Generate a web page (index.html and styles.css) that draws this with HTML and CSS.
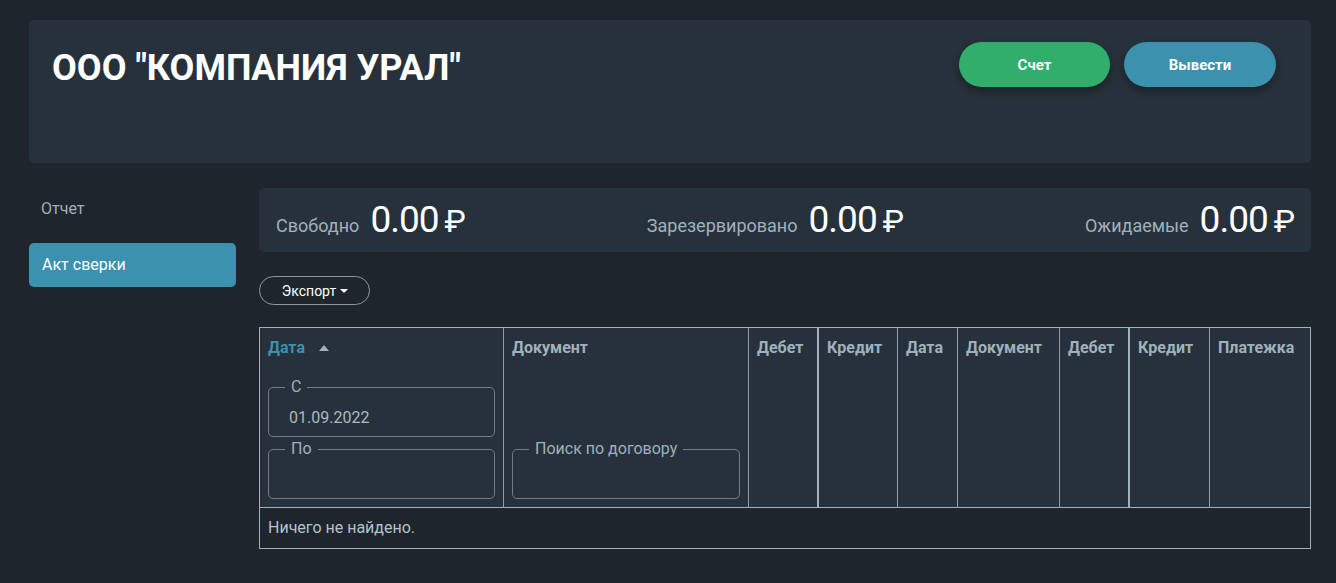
FILE: index.html
```html
<!DOCTYPE html>
<html lang="ru">
<head>
<meta charset="utf-8">
<title>ООО "КОМПАНИЯ УРАЛ"</title>
<link rel="stylesheet" href="styles.css">
</head>
<body>
<div class="page">
  <header class="head-card">
    <h1 class="title">ООО "КОМПАНИЯ УРАЛ"</h1>
    <div class="head-actions">
      <button class="pill pill-green">Счет</button>
      <button class="pill pill-blue">Вывести</button>
    </div>
  </header>

  <div class="layout">
    <nav class="sidebar">
      <a class="nav-item">Отчет</a>
      <a class="nav-item active">Акт сверки</a>
    </nav>

    <main class="main">
      <section class="balance">
        <div class="bal-item"><span class="bal-label">Свободно</span><span class="bal-amount">0.00<span class="rub">₽</span></span></div>
        <div class="bal-item"><span class="bal-label">Зарезервировано</span><span class="bal-amount">0.00<span class="rub">₽</span></span></div>
        <div class="bal-item"><span class="bal-label">Ожидаемые</span><span class="bal-amount">0.00<span class="rub">₽</span></span></div>
      </section>

      <div class="toolbar">
        <button class="export">Экспорт<span class="caret"></span></button>
      </div>

      <div class="grid">
        <div class="th th-date">
          <div class="th-title"><span class="sorted">Дата</span><span class="sort-up"></span></div>
          <div class="filters">
            <fieldset class="fs"><legend>С</legend><div class="fs-val">01.09.2022</div></fieldset>
            <fieldset class="fs"><legend>По</legend><div class="fs-val"></div></fieldset>
          </div>
        </div>
        <div class="th th-doc">
          <div class="th-title">Документ</div>
          <div class="filters">
            <fieldset class="fs"><legend>Поиск по договору</legend><div class="fs-val"></div></fieldset>
          </div>
        </div>
        <div class="th thick">Дебет</div>
        <div class="th">Кредит</div>
        <div class="th">Дата</div>
        <div class="th">Документ</div>
        <div class="th thick">Дебет</div>
        <div class="th">Кредит</div>
        <div class="th last">Платежка</div>
        <div class="empty">Ничего не найдено.</div>
      </div>
    </main>
  </div>
</div>
</body>
</html>
```

FILE: styles.css
```css
* { box-sizing: border-box; }
html, body { margin: 0; padding: 0; }
body {
  background: #1e252c;
  font-family: Roboto, "Liberation Sans", Arial, sans-serif;
  color: #9fb1bd;
}
.page { padding: 20px 25px 0 29px; }

.head-card {
  background: #27313b;
  border-radius: 5px;
  height: 143px;
  display: flex;
  justify-content: space-between;
  align-items: flex-start;
  padding: 22px 35px 0 23px;
}
.title {
  margin: 5px 0 0;
  font-size: 36px;
  line-height: 42px;
  font-weight: 700;
  color: #ffffff;
  letter-spacing: 0;
}
.head-actions { display: flex; gap: 14px; }
.pill {
  width: 151px;
  height: 45px;
  border: 0;
  border-radius: 23px;
  color: #fff;
  font-family: inherit;
  font-weight: 700;
  font-size: 15px;
  box-shadow: 0 4px 8px rgba(0, 0, 0, 0.35);
}
.pill-green { background: #31ad6c; }
.pill-blue { background: #3b91ae; width: 152px; }

.layout { display: flex; gap: 23px; margin-top: 23px; }
.sidebar { width: 207px; flex: none; display: flex; flex-direction: column; gap: 13px; }
.nav-item {
  display: block;
  height: 44px;
  line-height: 46px;
  padding: 0 12px;
  font-size: 16px;
  color: #9fb1bd;
  border-radius: 5px;
}
.nav-item.active { background: #3b91ae; color: #ffffff; padding-left: 13px; line-height: 44px; }

.main { flex: 1; min-width: 0; padding-top: 2px; }
.balance {
  background: #27313b;
  border-radius: 5px;
  height: 64px;
  padding: 10px 16px 0 17px;
  display: flex;
  justify-content: space-between;
  align-items: baseline;
}
.bal-item { display: flex; align-items: baseline; gap: 11px; }
.bal-label { font-size: 18px; color: #9fb1bd; }
.bal-amount { font-size: 37px; line-height: 44px; color: #ffffff; letter-spacing: -1px; }
.rub { font-size: 32px; margin-left: 6px; letter-spacing: 0; }

.toolbar { padding: 24px 0 22px; }
.export {
  width: 111px;
  height: 29px;
  border: 1px solid #8a98a2;
  border-radius: 15px;
  background: transparent;
  color: #ffffff;
  font-family: inherit;
  font-size: 14px;
  padding: 0 0 0 1px;
}
.caret {
  display: inline-block;
  margin-left: 4px;
  vertical-align: 3px;
  border-left: 4px solid transparent;
  border-right: 4px solid transparent;
  border-top: 4px solid #ffffff;
}

.grid {
  display: grid;
  grid-template-columns: 244px 245px 70px 79px 60px 102px 70px 80px 1fr;
  border: 1px solid #a2b1bb;
  background: #27313b;
}
.th {
  height: 180px;
  border-right: 1px solid #8e9ea8;
  border-bottom: 1px solid #a2b1bb;
  padding: 11px 8px 8px;
  font-size: 16px;
  line-height: 18px;
  font-weight: 700;
  color: #9fb1bd;
}
.th.thick { border-right: 2px solid #a2b1bb; }
.th.last { border-right: 0; }
.th-date, .th-doc { display: flex; flex-direction: column; justify-content: space-between; }
.th-title { display: flex; align-items: center; }
.sorted { color: #3b91ae; }
.sort-up {
  margin-left: 14px;
  border-left: 5px solid transparent;
  border-right: 5px solid transparent;
  border-bottom: 6px solid #9fb1bd;
}
.filters { display: flex; flex-direction: column; gap: 3px; }
.fs {
  margin: 0;
  padding: 0 0 0 16px;
  border: 1px solid #6e7e89;
  border-radius: 5px;
  min-width: 0;
}
.fs legend {
  padding: 0 6px;
  font-size: 16px;
  line-height: 18px;
  font-weight: 400;
  color: #9fb1bd;
}
.fs-val {
  height: 40px;
  line-height: 43px;
  padding-left: 4px;
  font-size: 16px;
  font-weight: 400;
  color: #a9bac5;
}
.empty {
  grid-column: 1 / -1;
  background: #1e252c;
  height: 40px;
  line-height: 40px;
  padding-left: 8px;
  font-size: 16px;
  color: #b3c2cb;
}
```
